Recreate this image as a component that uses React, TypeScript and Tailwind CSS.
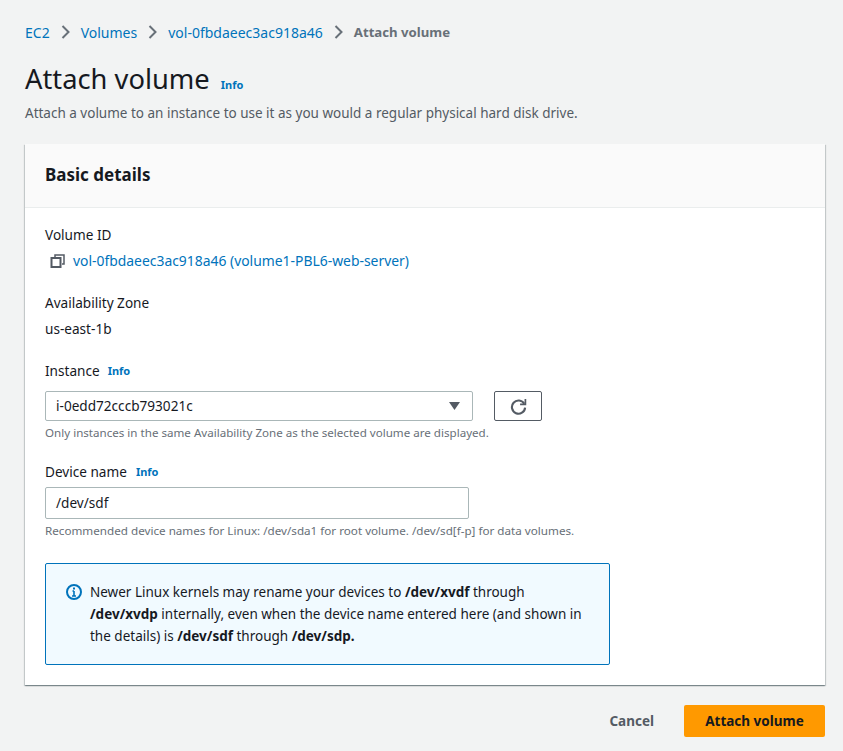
import React from "react";

const crumbs = ["EC2", "Volumes", "vol-0fbdaeec3ac918a46"];

const InfoLink = ({ className = "" }: { className?: string }) => (
  <span className={`text-[11px] leading-4 font-bold text-[#0073bb] ${className}`}>Info</span>
);

const App = () => {
  return (
    <div
      className="h-[751px] w-[843px] overflow-hidden bg-[#f2f3f3] pl-[25px] pr-[18px] text-[#16191f]"
      style={{ fontFamily: '"Noto Sans", sans-serif' }}
    >
      {/* Breadcrumbs */}
      <div className="flex h-[42px] items-center pt-[22px] text-[14px] text-[#0073bb]">
        {crumbs.map((crumb) => (
          <React.Fragment key={crumb}>
            <span>{crumb}</span>
            <svg className="mx-[11px] h-[14px] w-[9px] text-[#687078]" viewBox="0 0 9 14" fill="none" stroke="currentColor" strokeWidth="2">
              <path d="M1.5 1l6 6-6 6" />
            </svg>
          </React.Fragment>
        ))}
        <span className="mt-[1px] text-[13.2px] font-bold text-[#687078]">Attach volume</span>
      </div>

      {/* Page title */}
      <div className="mt-[19px] flex h-[36px] items-center">
        <h1 className="text-[27.3px] leading-[36px] font-normal">Attach volume</h1>
        <InfoLink className="ml-[11px] mt-[12px]" />
      </div>
      <p className="mt-[6px] text-[13.5px] leading-[20px] text-[#545b64]">
        Attach a volume to an instance to use it as you would a regular physical hard disk drive.
      </p>

      {/* Card */}
      <div className="mt-[21px] h-[541px] w-[800px] bg-white shadow-[0_1px_1px_0_rgba(0,28,36,0.3),1px_1px_1px_0_rgba(0,28,36,0.15),-1px_1px_1px_0_rgba(0,28,36,0.15)]">
        <div className="flex h-[64px] items-center border-b border-[#eaeded] bg-[#fafafa] px-[20px] pb-[2px]">
          <h2 className="text-[17px] font-bold">Basic details</h2>
        </div>

        <div className="px-[20px] pt-[17px] text-[13.6px] leading-[20px]">
          <div>Volume ID</div>
          <div className="mt-[6px] flex h-[20px] items-center text-[13.9px] text-[#0073bb]">
            <svg className="ml-[5px] mr-[7px] h-[16px] w-[16px] text-[#545b64]" viewBox="0 0 16 16" fill="none" stroke="currentColor" strokeWidth="2">
              <rect x="1.5" y="5" width="9" height="9" />
              <path d="M5 4V2h9v9h-2" strokeWidth="1.5" />
            </svg>
            <span>vol-0fbdaeec3ac918a46 (volume1-PBL6-web-server)</span>
          </div>

          <div className="mt-[22px]">Availability Zone</div>
          <div className="mt-[6px]">us-east-1b</div>

          <div className="mt-[22px] flex items-center">
            <span>Instance</span>
            <InfoLink className="ml-[8px]" />
          </div>
          <div className="mt-[10px] flex items-center">
            <div className="flex h-[30px] w-[428px] items-center justify-between rounded-[2px] border border-[#aab7b8] pl-[10px] pr-[12px]">
              <span>i-0edd72cccb793021c</span>
              <svg className="h-[8px] w-[11px] text-[#545b64]" viewBox="0 0 11 8" fill="currentColor">
                <path d="M0 0h11L5.5 8z" />
              </svg>
            </div>
            <button className="ml-[21px] flex h-[30px] w-[48px] items-center justify-center rounded-[2px] border border-[#545b64]">
              <svg className="h-[17px] w-[17px] text-[#545b64]" viewBox="0 0 16 16" fill="none" stroke="currentColor" strokeWidth="2">
                <path d="M13.4 5.5A6.2 6.2 0 1 0 14.2 9" />
                <path d="M14.5 1v5h-5" strokeWidth="1.6" />
              </svg>
            </button>
          </div>
          <div className="mt-[4px] text-[11.6px] leading-[16px] text-[#687078]">
            Only instances in the same Availability Zone as the selected volume are displayed.
          </div>

          <div className="mt-[21px] flex items-center">
            <span>Device name</span>
            <InfoLink className="ml-[9px]" />
          </div>
          <div className="mt-[5px] flex h-[32px] w-[424px] items-center rounded-[2px] border border-[#aab7b8] pl-[10px]">
            /dev/sdf
          </div>
          <div className="mt-[4px] text-[11.66px] leading-[16px] text-[#687078]">
            Recommended device names for Linux: /dev/sda1 for root volume. /dev/sd[f-p] for data volumes.
          </div>

          {/* Info alert */}
          <div className="mt-[24px] flex h-[102px] w-[565px] rounded-[2px] border border-[#0073bb] bg-[#f1faff] pl-[20px] pr-[20px] pt-[17px] text-[13.5px] leading-[22px]">
            <svg className="mr-[8px] mt-[3px] h-[16px] w-[16px] flex-none text-[#0073bb]" viewBox="0 0 16 16" fill="none" stroke="currentColor" strokeWidth="2">
              <circle cx="8" cy="8" r="7" />
              <path d="M8 7v5M6 12h4M6.5 7H8" strokeWidth="1.6" />
              <path d="M8 3.5v2" strokeWidth="2" />
            </svg>
            <p>
              Newer Linux kernels may rename your devices to <b>/dev/xvdf</b> through <b>/dev/xvdp</b> internally, even
              when the device name entered here (and shown in the details) is <b>/dev/sdf</b> through <b>/dev/sdp.</b>
            </p>
          </div>
        </div>
      </div>

      {/* Actions */}
      <div className="mt-[20px] flex items-center justify-end text-[13.5px] font-bold">
        <span className="mr-[30px] text-[#545b64]">Cancel</span>
        <button className="h-[32px] w-[141px] rounded-[2px] bg-[#ff9900] text-[#16191f]">Attach volume</button>
      </div>
    </div>
  );
};

export default App;
